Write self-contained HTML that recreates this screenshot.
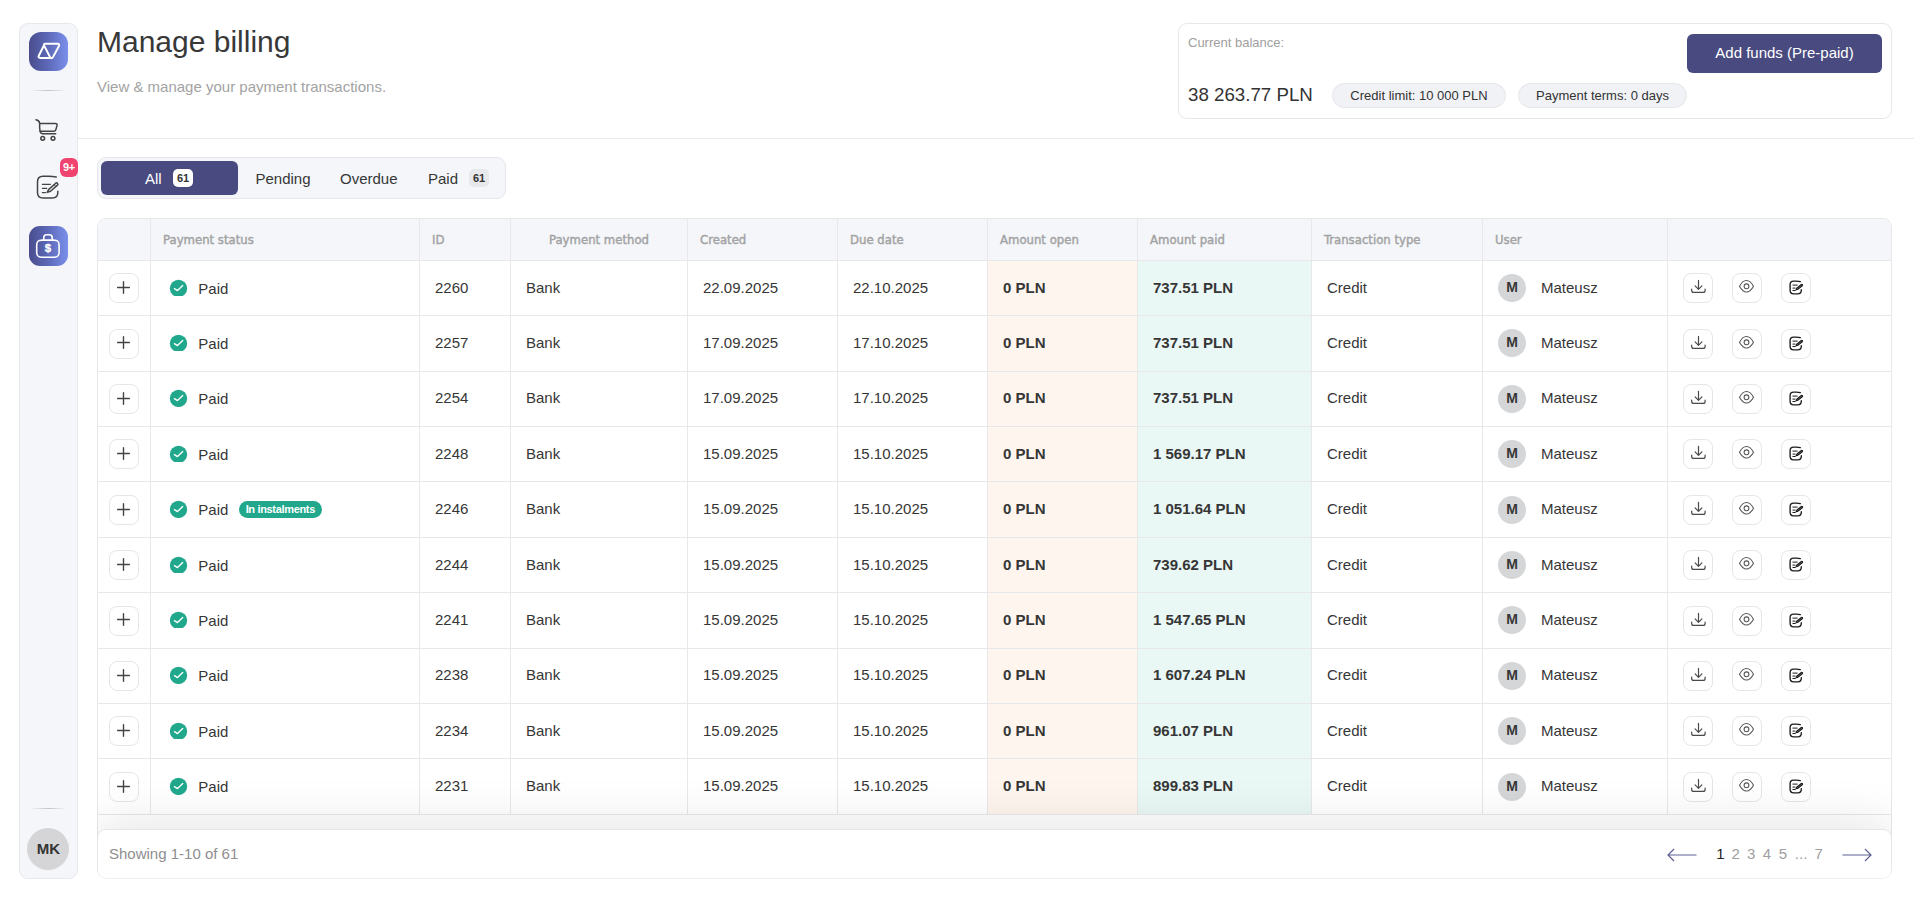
<!DOCTYPE html>
<html lang="en"><head><meta charset="utf-8"><title>Manage billing</title>
<style>
*{box-sizing:border-box;margin:0;padding:0}
html,body{width:1914px;height:901px;overflow:hidden;background:#fff}
body{position:relative;font-family:"Liberation Sans",Arial,sans-serif;font-size:15px;color:#363636;-webkit-font-smoothing:antialiased}
.abs{position:absolute}
/* sidebar */
.side{position:absolute;left:19px;top:23px;width:59px;height:855.5px;background:#f4f6fa;border:1px solid #e7e8ec;border-radius:9px}
.logo{position:absolute;left:29px;top:32px;width:39px;height:39px;border-radius:12px;background:linear-gradient(90deg,#4a4d8d 0%,#5b66b4 45%,#7b90ec 100%)}
.sdiv{position:absolute;left:30px;width:37px;height:1px;background:linear-gradient(90deg,rgba(200,200,200,0),rgba(190,190,190,.9) 50%,rgba(200,200,200,0))}
.navact{position:absolute;left:29px;top:226px;width:39px;height:40px;border-radius:11px;background:linear-gradient(90deg,#4a4d8d 0%,#5b66b4 45%,#7b90ec 100%)}
.badge9{position:absolute;left:60px;top:158px;width:18px;height:19px;border-radius:6px;background:#f0436f;color:#fff;font-weight:bold;font-size:11px;line-height:19px;text-align:center;letter-spacing:-.2px}
.mk{position:absolute;left:27px;text-indent:1px;top:828px;width:42px;height:42px;border-radius:50%;background:#d5d5d7;color:#333;font-weight:bold;font-size:15px;line-height:41px;text-align:center}
/* header */
.hline{position:absolute;left:78px;top:138px;width:1836px;height:1px;background:#e9e9eb}
h1{position:absolute;left:97px;top:25px;font-size:30px;font-weight:normal;line-height:34px;color:#383838;white-space:nowrap}
.sub{position:absolute;left:97px;top:78px;font-size:15px;line-height:18px;color:#a3a3a3;white-space:nowrap}
.bal{position:absolute;left:1178px;top:23px;width:714px;height:96px;border:1px solid #e8e8ea;border-radius:9px;background:#fff}
.bal .cb{position:absolute;left:9px;top:11px;font-size:13px;line-height:15px;color:#a0a0a0;white-space:nowrap}
.bal .amt{position:absolute;left:9px;top:60px;font-size:18.72px;line-height:22px;color:#333;white-space:nowrap}
.pill{position:absolute;top:59px;height:25px;border:1px solid #e6e7eb;background:#f1f2f6;border-radius:13px;font-size:13px;line-height:23px;color:#333;text-align:center;white-space:nowrap}
.btn{position:absolute;left:1687px;top:34px;width:195px;height:38.5px;border-radius:6px;background:#484a80;color:#fff;font-size:15px;line-height:38px;text-align:center;white-space:nowrap}
/* tabs */
.tabs{position:absolute;left:97px;top:157px;width:409px;height:42px;border:1px solid #e6e7eb;background:#f4f6fa;border-radius:9px}
.tabact{position:absolute;left:101px;top:161px;width:137px;height:34px;border-radius:6px;background:#484a80}
.tabt{position:absolute;top:170px;font-size:15px;line-height:18px;color:#363636;white-space:nowrap}
.tb{position:absolute;top:169px;width:20px;height:18px;border-radius:5px;font-size:11px;font-weight:bold;line-height:18px;text-align:center;color:#333}
/* table */
.tablewrap{position:absolute;left:97px;top:218px;width:1795px;height:661px;overflow:hidden}
.table{position:absolute;left:0;top:0;width:1795px;height:621px;border-bottom:0;border:1px solid #e8e8ea;border-radius:9px 9px 0 0;overflow:hidden;background:#fff}
.thead{position:absolute;left:0;top:0;width:1793px;height:41px;background:#f4f6fa}
.th{position:absolute;top:0;height:41px;border-left:1px solid #e8e8ea;padding-left:12px;font-family:"DejaVu Sans Condensed","DejaVu Sans","Liberation Sans",sans-serif;font-size:13px;line-height:41px;color:#a2a2a2;-webkit-text-stroke:.4px #a2a2a2;white-space:nowrap}
.th.c0{border-left:0}
.th.ctr{text-align:center;padding-left:0}
.tr{position:absolute;left:0;width:1793px;border-top:1px solid #e8e8ea}
.td{position:absolute;top:0;height:100%;border-left:1px solid #e8e8ea;padding-left:15px;white-space:nowrap;color:#363636}
.td.c0{border-left:0;padding-left:0}
.b{font-weight:bold}
.c0{left:0;width:52px}.c1{left:52px;width:269px}.c2{left:321px;width:91px}.c3{left:412px;width:177px}.c4{left:589px;width:150px}.c5{left:739px;width:150px}.c6{left:889px;width:150px}.c7{left:1039px;width:174px}.c8{left:1213px;width:171px}.c9{left:1384px;width:185px}.c10{left:1569px;width:224px}
.td.c6{background:#fef6ee}.td.c7{background:#e9f7f5}
.sq{position:absolute;top:calc(50% - 14.75px);width:29.5px;height:30px;border:1px solid #e6e6e8;border-radius:8px;background:#fff}
.sq svg{position:absolute;left:-1px;top:-1px}
.plus{left:11.2px;width:29.8px}
.plus svg{left:5.8px;top:5.9px}
.chk{position:absolute;left:18px;width:19px;overflow:hidden}.chk svg{position:absolute;left:0;top:0}
.paid{position:absolute;left:47.3px;margin-top:1px}
.inst{position:absolute;left:87.8px;top:calc(50% - 8.5px);width:83px;height:17px;border-radius:9px;background:#21a88c;color:#fff;font-size:11px;font-weight:bold;line-height:17px;text-align:center;letter-spacing:-.33px}
.av{position:absolute;left:15px;top:calc(50% - 14px);width:28px;height:28px;border-radius:50%;background:#d4d6d8;font-size:14px;font-weight:bold;line-height:27px;text-align:center;color:#363636}
.un{position:absolute;left:58px}
.a1{left:15px}.a2{left:64px}.a3{left:113px}
/* footer */
.footer{position:absolute;left:0;top:611px;width:1795px;height:49.5px;border:1px solid #e6e6e8;border-radius:9px;background:#fff;box-shadow:0 -5px 50px rgba(0,0,0,.11);clip-path:inset(-150px 0 0 0 round 0 0 9px 9px)}
.showing{position:absolute;left:11px;top:15px;font-size:15px;line-height:18px;color:#8e8e90;white-space:nowrap}
.pg{position:absolute;top:15px;font-size:15px;line-height:18px;color:#a0a0a0;white-space:nowrap}
.pg.cur{color:#222}
.arr{position:absolute;top:17.5px}
.al{left:1569.2px}.ar{left:1744px}
</style></head>
<body>

<div class="side"></div>
<div class="logo"><svg width="39" height="39" viewBox="0 0 39 39" style="position:absolute;left:0;top:0"><g fill="none" stroke="#fff" stroke-width="2" stroke-linejoin="round" stroke-linecap="round"><path d="M15.20 13.58Q14.30 11.80 16.30 11.80L28.40 11.80Q31.10 11.80 29.83 14.18L24.28 24.64Q22.50 28.00 20.78 24.61Z"/><path d="M14.90 13.50L9.91 23.49Q8.70 25.90 11.40 25.90L20.60 25.90"/></g></svg></div>
<div class="sdiv" style="top:90px"></div>
<svg class="abs" style="left:33px;top:116px" width="28" height="28" viewBox="0 0 28 28"><g fill="none" stroke="#444" stroke-width="1.5" stroke-linecap="round" stroke-linejoin="round"><path d="M3 3.800c2.200.300 3.300 1.300 3.700 3.500M6.700 7.400h15.600c1.500 0 2.100.900 1.700 2.200l-1.200 4.200c-.300 1-1 1.400-2 1.400H7.300"/><path d="M6.700 7.400c-.200 2.300-.100 5.200.300 7.800.300 1.700 1.100 2.500 2.700 2.500h13"/><circle cx="9.700" cy="22.300" r="1.900"/><circle cx="20" cy="22.300" r="1.900"/></g></svg>
<svg class="abs" style="left:33px;top:172px" width="30" height="30" viewBox="0 0 30 30"><g fill="none" stroke="#444" stroke-width="1.5" stroke-linecap="round" stroke-linejoin="round"><path d="M23.200 5.100C20.900 4.600 18.500 4.350 15.500 4.350H10C6 4.350 4.500 5.800 4.500 9.800V20.600C4.500 24.600 6 26.100 10 26.100H19.300C23.300 26.100 24.800 24.600 24.800 20.600V19.300"/><path d="M9.400 12.300h7.900M9.400 16.300h4.300M9.400 20.600h3" stroke-width="1.300"/><path d="M14.200 20.400L15.750 17.310L22.760 11.200A1.300 1.300 0 0 1 24.470 13.150L17.470 19.270Z"/><path d="M21.100 12.640L22.820 14.600" stroke-width="1"/></g></svg>
<div class="badge9">9+</div>
<div class="navact"><svg width="39" height="40" viewBox="0 0 39 40" style="position:absolute;left:0;top:0"><g fill="none" stroke="#fff" stroke-width="1.600" stroke-linecap="round" stroke-linejoin="round"><path d="M18.900 14.100H13C9 14.100 7.700 15.400 7.700 19.400V26C7.700 30 9 31.200 13 31.200H24.800C28.800 31.200 30.100 30 30.100 26V19.400C30.100 15.400 28.800 14.100 24.800 14.100Z"/><path d="M14.800 14.100V11.500C14.800 9.700 15.700 8.800 17.500 8.800H20.500C22.300 8.800 23.200 9.700 23.200 11.500V14.100"/></g><text x="19" y="26.300" text-anchor="middle" font-family="Liberation Sans, sans-serif" font-weight="bold" font-size="11.500" fill="#fff" stroke="#fff" stroke-width=".3">$</text></svg></div>
<div class="sdiv" style="top:808px"></div>
<div class="mk">MK</div>
<h1>Manage billing</h1>
<div class="sub">View &amp; manage your payment transactions.</div>
<div class="hline"></div>
<div class="bal">
<div class="cb">Current balance:</div>
<div class="amt">38 263.77 PLN</div>
<div class="pill" style="left:153px;width:174px">Credit limit: 10 000 PLN</div>
<div class="pill" style="left:339px;width:169px">Payment terms: 0 days</div>
</div>
<div class="btn">Add funds (Pre-paid)</div>
<div class="tabs"></div>
<div class="tabact"></div>
<div class="tabt" style="left:145px;color:#fff">All</div>
<div class="tb" style="left:173px;background:#fff">61</div>
<div class="tabt" style="left:255.5px">Pending</div>
<div class="tabt" style="left:340px">Overdue</div>
<div class="tabt" style="left:428px">Paid</div>
<div class="tb" style="left:469px;background:#e7e8ec">61</div>

<div class="tablewrap">
<div class="table">
<div class="thead">
<div class="th c0"></div>
<div class="th c1">Payment status</div>
<div class="th c2">ID</div>
<div class="th c3 ctr">Payment method</div>
<div class="th c4">Created</div>
<div class="th c5">Due date</div>
<div class="th c6">Amount open</div>
<div class="th c7">Amount paid</div>
<div class="th c8">Transaction type</div>
<div class="th c9">User</div>
<div class="th c10"></div>
</div>
<div class="tr" style="top:41px;height:55px;line-height:54.09px">
<div class="td c0"><span class="sq plus" style="top:12.10px"><svg width="15" height="15" viewBox="0 0 15 15"><path d="M7.500 1.650v11.700M1.650 7.500h11.700" stroke="#444" stroke-width="1.400" stroke-linecap="round" fill="none"/></svg></span></div>
<div class="td c1"><span class="chk" style="top:18px;height:17px"><svg width="19" height="19" viewBox="0 0 19 19"><circle cx="9.500" cy="9.400" r="8.650" fill="#21a88c"/><path d="M5.400 9.600L8.500 11.600L13.700 6.450" stroke="#fff" stroke-width="1.350" fill="none" stroke-linecap="round" stroke-linejoin="round"/></svg></span><span class="paid">Paid</span></div>
<div class="td c2">2260</div>
<div class="td c3">Bank</div>
<div class="td c4">22.09.2025</div>
<div class="td c5">22.10.2025</div>
<div class="td c6 b">0 PLN</div>
<div class="td c7 b">737.51 PLN</div>
<div class="td c8">Credit</div>
<div class="td c9"><span class="av" style="top:13.00px">M</span><span class="un">Mateusz</span></div>
<div class="td c10"><span class="sq a1" style="top:12.10px"><svg width="30" height="30" viewBox="0 0 30 30"><g fill="none" stroke="#4a4a4a" stroke-width="1.2" stroke-linecap="round" stroke-linejoin="round"><path d="M15.5 7.400v8.800M12.100 12.900l3.400 3.400 3.400-3.400"/><path d="M8.700 16.100v1.300a2 2 0 0 0 2 2h9.400a2 2 0 0 0 2-2v-1.300"/></g></svg></span><span class="sq a2" style="top:12.10px"><svg width="30" height="30" viewBox="0 0 30 30"><g fill="none" stroke="#555" stroke-width="1.050"><path d="M7.500 13.250C9.500 9.500 12 7.500 14.500 7.500s5 2 7 5.750c-2 3.750-4.500 5.750-7 5.750s-5-2-7-5.750z"/><circle cx="14.500" cy="13.250" r="2.400"/></g></svg></span><span class="sq a3" style="top:12.10px"><svg width="30" height="30" viewBox="0 0 30 30"><g fill="none" stroke="#1c1c1c" stroke-width="1.350" stroke-linecap="round" stroke-linejoin="round"><path d="M19.300 8.600c-1.200-.350-2.500-.500-4-.500h-2.700c-2.600 0-3.500.900-3.500 3.500v5.700c0 2.600.900 3.500 3.500 3.500h4.200c2.600 0 3.500-.900 3.500-3.500v-.600"/><path d="M11.900 12.100h4.300M11.900 15.100h2.200M11.900 17.500h2.400" stroke-width="1"/><path d="M14.970 16.730L16.030 14.830L20.280 11.500A.850 .850 0 0 1 21.320 12.840L17.070 16.170Z" fill="#555" stroke-width="1.050"/></g></svg></span></div>
</div>
<div class="tr" style="top:96px;height:56px;line-height:54.09px">
<div class="td c0"><span class="sq plus" style="top:12.50px"><svg width="15" height="15" viewBox="0 0 15 15"><path d="M7.500 1.650v11.700M1.650 7.500h11.700" stroke="#444" stroke-width="1.400" stroke-linecap="round" fill="none"/></svg></span></div>
<div class="td c1"><span class="chk" style="top:18px;height:17px"><svg width="19" height="19" viewBox="0 0 19 19"><circle cx="9.500" cy="9.400" r="8.650" fill="#21a88c"/><path d="M5.400 9.600L8.500 11.600L13.700 6.450" stroke="#fff" stroke-width="1.350" fill="none" stroke-linecap="round" stroke-linejoin="round"/></svg></span><span class="paid">Paid</span></div>
<div class="td c2">2257</div>
<div class="td c3">Bank</div>
<div class="td c4">17.09.2025</div>
<div class="td c5">17.10.2025</div>
<div class="td c6 b">0 PLN</div>
<div class="td c7 b">737.51 PLN</div>
<div class="td c8">Credit</div>
<div class="td c9"><span class="av" style="top:13.40px">M</span><span class="un">Mateusz</span></div>
<div class="td c10"><span class="sq a1" style="top:12.50px"><svg width="30" height="30" viewBox="0 0 30 30"><g fill="none" stroke="#4a4a4a" stroke-width="1.2" stroke-linecap="round" stroke-linejoin="round"><path d="M15.5 7.400v8.800M12.100 12.900l3.400 3.400 3.400-3.400"/><path d="M8.700 16.100v1.300a2 2 0 0 0 2 2h9.400a2 2 0 0 0 2-2v-1.300"/></g></svg></span><span class="sq a2" style="top:12.50px"><svg width="30" height="30" viewBox="0 0 30 30"><g fill="none" stroke="#555" stroke-width="1.050"><path d="M7.500 13.250C9.500 9.500 12 7.500 14.500 7.500s5 2 7 5.750c-2 3.750-4.500 5.750-7 5.750s-5-2-7-5.750z"/><circle cx="14.500" cy="13.250" r="2.400"/></g></svg></span><span class="sq a3" style="top:12.50px"><svg width="30" height="30" viewBox="0 0 30 30"><g fill="none" stroke="#1c1c1c" stroke-width="1.350" stroke-linecap="round" stroke-linejoin="round"><path d="M19.300 8.600c-1.200-.350-2.500-.500-4-.500h-2.700c-2.600 0-3.500.900-3.500 3.500v5.700c0 2.600.900 3.500 3.500 3.500h4.200c2.600 0 3.500-.900 3.500-3.500v-.600"/><path d="M11.900 12.100h4.300M11.900 15.100h2.200M11.900 17.500h2.400" stroke-width="1"/><path d="M14.970 16.730L16.030 14.830L20.280 11.500A.850 .850 0 0 1 21.320 12.840L17.070 16.170Z" fill="#555" stroke-width="1.050"/></g></svg></span></div>
</div>
<div class="tr" style="top:152px;height:55px;line-height:52.09px">
<div class="td c0"><span class="sq plus" style="top:11.90px"><svg width="15" height="15" viewBox="0 0 15 15"><path d="M7.500 1.650v11.700M1.650 7.500h11.700" stroke="#444" stroke-width="1.400" stroke-linecap="round" fill="none"/></svg></span></div>
<div class="td c1"><span class="chk" style="top:17px;height:18px"><svg width="19" height="19" viewBox="0 0 19 19"><circle cx="9.500" cy="9.400" r="8.650" fill="#21a88c"/><path d="M5.400 9.600L8.500 11.600L13.700 6.450" stroke="#fff" stroke-width="1.350" fill="none" stroke-linecap="round" stroke-linejoin="round"/></svg></span><span class="paid">Paid</span></div>
<div class="td c2">2254</div>
<div class="td c3">Bank</div>
<div class="td c4">17.09.2025</div>
<div class="td c5">17.10.2025</div>
<div class="td c6 b">0 PLN</div>
<div class="td c7 b">737.51 PLN</div>
<div class="td c8">Credit</div>
<div class="td c9"><span class="av" style="top:12.80px">M</span><span class="un">Mateusz</span></div>
<div class="td c10"><span class="sq a1" style="top:11.90px"><svg width="30" height="30" viewBox="0 0 30 30"><g fill="none" stroke="#4a4a4a" stroke-width="1.2" stroke-linecap="round" stroke-linejoin="round"><path d="M15.5 7.400v8.800M12.100 12.900l3.400 3.400 3.400-3.400"/><path d="M8.700 16.100v1.300a2 2 0 0 0 2 2h9.400a2 2 0 0 0 2-2v-1.300"/></g></svg></span><span class="sq a2" style="top:11.90px"><svg width="30" height="30" viewBox="0 0 30 30"><g fill="none" stroke="#555" stroke-width="1.050"><path d="M7.500 13.250C9.500 9.500 12 7.500 14.500 7.500s5 2 7 5.750c-2 3.750-4.500 5.750-7 5.750s-5-2-7-5.750z"/><circle cx="14.500" cy="13.250" r="2.400"/></g></svg></span><span class="sq a3" style="top:11.90px"><svg width="30" height="30" viewBox="0 0 30 30"><g fill="none" stroke="#1c1c1c" stroke-width="1.350" stroke-linecap="round" stroke-linejoin="round"><path d="M19.300 8.600c-1.200-.350-2.500-.500-4-.500h-2.700c-2.600 0-3.500.900-3.500 3.500v5.700c0 2.600.900 3.500 3.500 3.500h4.200c2.600 0 3.500-.900 3.500-3.500v-.600"/><path d="M11.900 12.100h4.300M11.900 15.100h2.200M11.900 17.500h2.400" stroke-width="1"/><path d="M14.970 16.730L16.030 14.830L20.280 11.500A.850 .850 0 0 1 21.320 12.840L17.070 16.170Z" fill="#555" stroke-width="1.050"/></g></svg></span></div>
</div>
<div class="tr" style="top:207px;height:55px;line-height:54.09px">
<div class="td c0"><span class="sq plus" style="top:12.30px"><svg width="15" height="15" viewBox="0 0 15 15"><path d="M7.500 1.650v11.700M1.650 7.500h11.700" stroke="#444" stroke-width="1.400" stroke-linecap="round" fill="none"/></svg></span></div>
<div class="td c1"><span class="chk" style="top:18px;height:17px"><svg width="19" height="19" viewBox="0 0 19 19"><circle cx="9.500" cy="9.400" r="8.650" fill="#21a88c"/><path d="M5.400 9.600L8.500 11.600L13.700 6.450" stroke="#fff" stroke-width="1.350" fill="none" stroke-linecap="round" stroke-linejoin="round"/></svg></span><span class="paid">Paid</span></div>
<div class="td c2">2248</div>
<div class="td c3">Bank</div>
<div class="td c4">15.09.2025</div>
<div class="td c5">15.10.2025</div>
<div class="td c6 b">0 PLN</div>
<div class="td c7 b">1 569.17 PLN</div>
<div class="td c8">Credit</div>
<div class="td c9"><span class="av" style="top:13.20px">M</span><span class="un">Mateusz</span></div>
<div class="td c10"><span class="sq a1" style="top:12.30px"><svg width="30" height="30" viewBox="0 0 30 30"><g fill="none" stroke="#4a4a4a" stroke-width="1.2" stroke-linecap="round" stroke-linejoin="round"><path d="M15.5 7.400v8.800M12.100 12.900l3.400 3.400 3.400-3.400"/><path d="M8.700 16.100v1.300a2 2 0 0 0 2 2h9.400a2 2 0 0 0 2-2v-1.300"/></g></svg></span><span class="sq a2" style="top:12.30px"><svg width="30" height="30" viewBox="0 0 30 30"><g fill="none" stroke="#555" stroke-width="1.050"><path d="M7.500 13.250C9.500 9.500 12 7.500 14.500 7.500s5 2 7 5.750c-2 3.750-4.500 5.750-7 5.750s-5-2-7-5.750z"/><circle cx="14.500" cy="13.250" r="2.400"/></g></svg></span><span class="sq a3" style="top:12.30px"><svg width="30" height="30" viewBox="0 0 30 30"><g fill="none" stroke="#1c1c1c" stroke-width="1.350" stroke-linecap="round" stroke-linejoin="round"><path d="M19.300 8.600c-1.200-.350-2.500-.500-4-.500h-2.700c-2.600 0-3.500.900-3.500 3.500v5.700c0 2.600.900 3.500 3.500 3.500h4.200c2.600 0 3.500-.900 3.500-3.500v-.600"/><path d="M11.900 12.100h4.300M11.900 15.100h2.200M11.900 17.500h2.400" stroke-width="1"/><path d="M14.970 16.730L16.030 14.830L20.280 11.500A.850 .850 0 0 1 21.320 12.840L17.070 16.170Z" fill="#555" stroke-width="1.050"/></g></svg></span></div>
</div>
<div class="tr" style="top:262px;height:56px;line-height:54.09px">
<div class="td c0"><span class="sq plus" style="top:12.70px"><svg width="15" height="15" viewBox="0 0 15 15"><path d="M7.500 1.650v11.700M1.650 7.500h11.700" stroke="#444" stroke-width="1.400" stroke-linecap="round" fill="none"/></svg></span></div>
<div class="td c1"><span class="chk" style="top:18px;height:18px"><svg width="19" height="19" viewBox="0 0 19 19"><circle cx="9.500" cy="9.400" r="8.650" fill="#21a88c"/><path d="M5.400 9.600L8.500 11.600L13.700 6.450" stroke="#fff" stroke-width="1.350" fill="none" stroke-linecap="round" stroke-linejoin="round"/></svg></span><span class="paid">Paid</span><span class="inst" style="top:19.10px">In instalments</span></div>
<div class="td c2">2246</div>
<div class="td c3">Bank</div>
<div class="td c4">15.09.2025</div>
<div class="td c5">15.10.2025</div>
<div class="td c6 b">0 PLN</div>
<div class="td c7 b">1 051.64 PLN</div>
<div class="td c8">Credit</div>
<div class="td c9"><span class="av" style="top:13.60px">M</span><span class="un">Mateusz</span></div>
<div class="td c10"><span class="sq a1" style="top:12.70px"><svg width="30" height="30" viewBox="0 0 30 30"><g fill="none" stroke="#4a4a4a" stroke-width="1.2" stroke-linecap="round" stroke-linejoin="round"><path d="M15.5 7.400v8.800M12.100 12.900l3.400 3.400 3.400-3.400"/><path d="M8.700 16.100v1.300a2 2 0 0 0 2 2h9.400a2 2 0 0 0 2-2v-1.300"/></g></svg></span><span class="sq a2" style="top:12.70px"><svg width="30" height="30" viewBox="0 0 30 30"><g fill="none" stroke="#555" stroke-width="1.050"><path d="M7.500 13.250C9.500 9.500 12 7.500 14.500 7.500s5 2 7 5.750c-2 3.750-4.500 5.750-7 5.750s-5-2-7-5.750z"/><circle cx="14.500" cy="13.250" r="2.400"/></g></svg></span><span class="sq a3" style="top:12.70px"><svg width="30" height="30" viewBox="0 0 30 30"><g fill="none" stroke="#1c1c1c" stroke-width="1.350" stroke-linecap="round" stroke-linejoin="round"><path d="M19.300 8.600c-1.200-.350-2.500-.500-4-.500h-2.700c-2.600 0-3.500.900-3.500 3.500v5.700c0 2.600.900 3.500 3.500 3.500h4.200c2.600 0 3.500-.900 3.500-3.500v-.600"/><path d="M11.900 12.100h4.300M11.900 15.100h2.200M11.900 17.500h2.400" stroke-width="1"/><path d="M14.970 16.730L16.030 14.830L20.280 11.500A.850 .850 0 0 1 21.320 12.840L17.070 16.170Z" fill="#555" stroke-width="1.050"/></g></svg></span></div>
</div>
<div class="tr" style="top:318px;height:55px;line-height:54.09px">
<div class="td c0"><span class="sq plus" style="top:12.10px"><svg width="15" height="15" viewBox="0 0 15 15"><path d="M7.500 1.650v11.700M1.650 7.500h11.700" stroke="#444" stroke-width="1.400" stroke-linecap="round" fill="none"/></svg></span></div>
<div class="td c1"><span class="chk" style="top:18px;height:17px"><svg width="19" height="19" viewBox="0 0 19 19"><circle cx="9.500" cy="9.400" r="8.650" fill="#21a88c"/><path d="M5.400 9.600L8.500 11.600L13.700 6.450" stroke="#fff" stroke-width="1.350" fill="none" stroke-linecap="round" stroke-linejoin="round"/></svg></span><span class="paid">Paid</span></div>
<div class="td c2">2244</div>
<div class="td c3">Bank</div>
<div class="td c4">15.09.2025</div>
<div class="td c5">15.10.2025</div>
<div class="td c6 b">0 PLN</div>
<div class="td c7 b">739.62 PLN</div>
<div class="td c8">Credit</div>
<div class="td c9"><span class="av" style="top:13.00px">M</span><span class="un">Mateusz</span></div>
<div class="td c10"><span class="sq a1" style="top:12.10px"><svg width="30" height="30" viewBox="0 0 30 30"><g fill="none" stroke="#4a4a4a" stroke-width="1.2" stroke-linecap="round" stroke-linejoin="round"><path d="M15.5 7.400v8.800M12.100 12.900l3.400 3.400 3.400-3.400"/><path d="M8.700 16.100v1.300a2 2 0 0 0 2 2h9.400a2 2 0 0 0 2-2v-1.300"/></g></svg></span><span class="sq a2" style="top:12.10px"><svg width="30" height="30" viewBox="0 0 30 30"><g fill="none" stroke="#555" stroke-width="1.050"><path d="M7.500 13.250C9.500 9.500 12 7.500 14.500 7.500s5 2 7 5.750c-2 3.750-4.500 5.750-7 5.750s-5-2-7-5.750z"/><circle cx="14.500" cy="13.250" r="2.400"/></g></svg></span><span class="sq a3" style="top:12.10px"><svg width="30" height="30" viewBox="0 0 30 30"><g fill="none" stroke="#1c1c1c" stroke-width="1.350" stroke-linecap="round" stroke-linejoin="round"><path d="M19.300 8.600c-1.200-.350-2.500-.500-4-.500h-2.700c-2.600 0-3.500.900-3.500 3.500v5.700c0 2.600.900 3.500 3.500 3.500h4.200c2.600 0 3.500-.900 3.500-3.500v-.600"/><path d="M11.900 12.100h4.300M11.900 15.100h2.200M11.900 17.500h2.400" stroke-width="1"/><path d="M14.970 16.730L16.030 14.830L20.280 11.500A.850 .850 0 0 1 21.320 12.840L17.070 16.170Z" fill="#555" stroke-width="1.050"/></g></svg></span></div>
</div>
<div class="tr" style="top:373px;height:56px;line-height:54.09px">
<div class="td c0"><span class="sq plus" style="top:12.50px"><svg width="15" height="15" viewBox="0 0 15 15"><path d="M7.500 1.650v11.700M1.650 7.500h11.700" stroke="#444" stroke-width="1.400" stroke-linecap="round" fill="none"/></svg></span></div>
<div class="td c1"><span class="chk" style="top:18px;height:17px"><svg width="19" height="19" viewBox="0 0 19 19"><circle cx="9.500" cy="9.400" r="8.650" fill="#21a88c"/><path d="M5.400 9.600L8.500 11.600L13.700 6.450" stroke="#fff" stroke-width="1.350" fill="none" stroke-linecap="round" stroke-linejoin="round"/></svg></span><span class="paid">Paid</span></div>
<div class="td c2">2241</div>
<div class="td c3">Bank</div>
<div class="td c4">15.09.2025</div>
<div class="td c5">15.10.2025</div>
<div class="td c6 b">0 PLN</div>
<div class="td c7 b">1 547.65 PLN</div>
<div class="td c8">Credit</div>
<div class="td c9"><span class="av" style="top:13.40px">M</span><span class="un">Mateusz</span></div>
<div class="td c10"><span class="sq a1" style="top:12.50px"><svg width="30" height="30" viewBox="0 0 30 30"><g fill="none" stroke="#4a4a4a" stroke-width="1.2" stroke-linecap="round" stroke-linejoin="round"><path d="M15.5 7.400v8.800M12.100 12.900l3.400 3.400 3.400-3.400"/><path d="M8.700 16.100v1.300a2 2 0 0 0 2 2h9.400a2 2 0 0 0 2-2v-1.300"/></g></svg></span><span class="sq a2" style="top:12.50px"><svg width="30" height="30" viewBox="0 0 30 30"><g fill="none" stroke="#555" stroke-width="1.050"><path d="M7.500 13.250C9.500 9.500 12 7.500 14.500 7.500s5 2 7 5.750c-2 3.750-4.500 5.750-7 5.750s-5-2-7-5.750z"/><circle cx="14.500" cy="13.250" r="2.400"/></g></svg></span><span class="sq a3" style="top:12.50px"><svg width="30" height="30" viewBox="0 0 30 30"><g fill="none" stroke="#1c1c1c" stroke-width="1.350" stroke-linecap="round" stroke-linejoin="round"><path d="M19.300 8.600c-1.200-.350-2.500-.500-4-.500h-2.700c-2.600 0-3.500.900-3.500 3.500v5.700c0 2.600.900 3.500 3.500 3.500h4.200c2.600 0 3.500-.900 3.500-3.500v-.600"/><path d="M11.900 12.100h4.300M11.900 15.100h2.200M11.900 17.500h2.400" stroke-width="1"/><path d="M14.970 16.730L16.030 14.830L20.280 11.500A.850 .850 0 0 1 21.320 12.840L17.070 16.170Z" fill="#555" stroke-width="1.050"/></g></svg></span></div>
</div>
<div class="tr" style="top:429px;height:55px;line-height:52.09px">
<div class="td c0"><span class="sq plus" style="top:11.90px"><svg width="15" height="15" viewBox="0 0 15 15"><path d="M7.500 1.650v11.700M1.650 7.500h11.700" stroke="#444" stroke-width="1.400" stroke-linecap="round" fill="none"/></svg></span></div>
<div class="td c1"><span class="chk" style="top:17px;height:18px"><svg width="19" height="19" viewBox="0 0 19 19"><circle cx="9.500" cy="9.400" r="8.650" fill="#21a88c"/><path d="M5.400 9.600L8.500 11.600L13.700 6.450" stroke="#fff" stroke-width="1.350" fill="none" stroke-linecap="round" stroke-linejoin="round"/></svg></span><span class="paid">Paid</span></div>
<div class="td c2">2238</div>
<div class="td c3">Bank</div>
<div class="td c4">15.09.2025</div>
<div class="td c5">15.10.2025</div>
<div class="td c6 b">0 PLN</div>
<div class="td c7 b">1 607.24 PLN</div>
<div class="td c8">Credit</div>
<div class="td c9"><span class="av" style="top:12.80px">M</span><span class="un">Mateusz</span></div>
<div class="td c10"><span class="sq a1" style="top:11.90px"><svg width="30" height="30" viewBox="0 0 30 30"><g fill="none" stroke="#4a4a4a" stroke-width="1.2" stroke-linecap="round" stroke-linejoin="round"><path d="M15.5 7.400v8.800M12.100 12.900l3.400 3.400 3.400-3.400"/><path d="M8.700 16.100v1.300a2 2 0 0 0 2 2h9.400a2 2 0 0 0 2-2v-1.300"/></g></svg></span><span class="sq a2" style="top:11.90px"><svg width="30" height="30" viewBox="0 0 30 30"><g fill="none" stroke="#555" stroke-width="1.050"><path d="M7.500 13.250C9.500 9.500 12 7.500 14.500 7.500s5 2 7 5.750c-2 3.750-4.500 5.750-7 5.750s-5-2-7-5.750z"/><circle cx="14.500" cy="13.250" r="2.400"/></g></svg></span><span class="sq a3" style="top:11.90px"><svg width="30" height="30" viewBox="0 0 30 30"><g fill="none" stroke="#1c1c1c" stroke-width="1.350" stroke-linecap="round" stroke-linejoin="round"><path d="M19.300 8.600c-1.200-.350-2.500-.500-4-.500h-2.700c-2.600 0-3.500.900-3.500 3.500v5.700c0 2.600.900 3.500 3.500 3.500h4.200c2.600 0 3.500-.900 3.500-3.500v-.600"/><path d="M11.900 12.100h4.300M11.900 15.100h2.200M11.900 17.500h2.400" stroke-width="1"/><path d="M14.970 16.730L16.030 14.830L20.280 11.500A.850 .850 0 0 1 21.320 12.840L17.070 16.170Z" fill="#555" stroke-width="1.050"/></g></svg></span></div>
</div>
<div class="tr" style="top:484px;height:55px;line-height:54.09px">
<div class="td c0"><span class="sq plus" style="top:12.30px"><svg width="15" height="15" viewBox="0 0 15 15"><path d="M7.500 1.650v11.700M1.650 7.500h11.700" stroke="#444" stroke-width="1.400" stroke-linecap="round" fill="none"/></svg></span></div>
<div class="td c1"><span class="chk" style="top:18px;height:17px"><svg width="19" height="19" viewBox="0 0 19 19"><circle cx="9.500" cy="9.400" r="8.650" fill="#21a88c"/><path d="M5.400 9.600L8.500 11.600L13.700 6.450" stroke="#fff" stroke-width="1.350" fill="none" stroke-linecap="round" stroke-linejoin="round"/></svg></span><span class="paid">Paid</span></div>
<div class="td c2">2234</div>
<div class="td c3">Bank</div>
<div class="td c4">15.09.2025</div>
<div class="td c5">15.10.2025</div>
<div class="td c6 b">0 PLN</div>
<div class="td c7 b">961.07 PLN</div>
<div class="td c8">Credit</div>
<div class="td c9"><span class="av" style="top:13.20px">M</span><span class="un">Mateusz</span></div>
<div class="td c10"><span class="sq a1" style="top:12.30px"><svg width="30" height="30" viewBox="0 0 30 30"><g fill="none" stroke="#4a4a4a" stroke-width="1.2" stroke-linecap="round" stroke-linejoin="round"><path d="M15.5 7.400v8.800M12.100 12.900l3.400 3.400 3.400-3.400"/><path d="M8.700 16.100v1.300a2 2 0 0 0 2 2h9.400a2 2 0 0 0 2-2v-1.300"/></g></svg></span><span class="sq a2" style="top:12.30px"><svg width="30" height="30" viewBox="0 0 30 30"><g fill="none" stroke="#555" stroke-width="1.050"><path d="M7.500 13.250C9.500 9.500 12 7.500 14.500 7.500s5 2 7 5.750c-2 3.750-4.500 5.750-7 5.750s-5-2-7-5.750z"/><circle cx="14.500" cy="13.250" r="2.400"/></g></svg></span><span class="sq a3" style="top:12.30px"><svg width="30" height="30" viewBox="0 0 30 30"><g fill="none" stroke="#1c1c1c" stroke-width="1.350" stroke-linecap="round" stroke-linejoin="round"><path d="M19.300 8.600c-1.200-.350-2.500-.500-4-.500h-2.700c-2.600 0-3.500.900-3.500 3.500v5.700c0 2.600.900 3.500 3.500 3.500h4.200c2.600 0 3.500-.900 3.500-3.500v-.600"/><path d="M11.900 12.100h4.300M11.900 15.100h2.200M11.900 17.500h2.400" stroke-width="1"/><path d="M14.970 16.730L16.030 14.830L20.280 11.500A.850 .850 0 0 1 21.320 12.840L17.070 16.170Z" fill="#555" stroke-width="1.050"/></g></svg></span></div>
</div>
<div class="tr" style="top:539px;height:56px;line-height:54.09px">
<div class="td c0"><span class="sq plus" style="top:12.70px"><svg width="15" height="15" viewBox="0 0 15 15"><path d="M7.500 1.650v11.700M1.650 7.500h11.700" stroke="#444" stroke-width="1.400" stroke-linecap="round" fill="none"/></svg></span></div>
<div class="td c1"><span class="chk" style="top:18px;height:18px"><svg width="19" height="19" viewBox="0 0 19 19"><circle cx="9.500" cy="9.400" r="8.650" fill="#21a88c"/><path d="M5.400 9.600L8.500 11.600L13.700 6.450" stroke="#fff" stroke-width="1.350" fill="none" stroke-linecap="round" stroke-linejoin="round"/></svg></span><span class="paid">Paid</span></div>
<div class="td c2">2231</div>
<div class="td c3">Bank</div>
<div class="td c4">15.09.2025</div>
<div class="td c5">15.10.2025</div>
<div class="td c6 b">0 PLN</div>
<div class="td c7 b">899.83 PLN</div>
<div class="td c8">Credit</div>
<div class="td c9"><span class="av" style="top:13.60px">M</span><span class="un">Mateusz</span></div>
<div class="td c10"><span class="sq a1" style="top:12.70px"><svg width="30" height="30" viewBox="0 0 30 30"><g fill="none" stroke="#4a4a4a" stroke-width="1.2" stroke-linecap="round" stroke-linejoin="round"><path d="M15.5 7.400v8.800M12.100 12.900l3.400 3.400 3.400-3.400"/><path d="M8.700 16.100v1.300a2 2 0 0 0 2 2h9.400a2 2 0 0 0 2-2v-1.300"/></g></svg></span><span class="sq a2" style="top:12.70px"><svg width="30" height="30" viewBox="0 0 30 30"><g fill="none" stroke="#555" stroke-width="1.050"><path d="M7.500 13.250C9.500 9.500 12 7.500 14.500 7.500s5 2 7 5.750c-2 3.750-4.500 5.750-7 5.750s-5-2-7-5.750z"/><circle cx="14.500" cy="13.250" r="2.400"/></g></svg></span><span class="sq a3" style="top:12.70px"><svg width="30" height="30" viewBox="0 0 30 30"><g fill="none" stroke="#1c1c1c" stroke-width="1.350" stroke-linecap="round" stroke-linejoin="round"><path d="M19.300 8.600c-1.200-.350-2.500-.500-4-.500h-2.700c-2.600 0-3.500.900-3.500 3.500v5.700c0 2.600.900 3.500 3.500 3.500h4.200c2.600 0 3.500-.900 3.500-3.500v-.600"/><path d="M11.900 12.100h4.300M11.900 15.100h2.200M11.900 17.500h2.400" stroke-width="1"/><path d="M14.970 16.730L16.030 14.830L20.280 11.500A.850 .850 0 0 1 21.320 12.840L17.070 16.170Z" fill="#555" stroke-width="1.050"/></g></svg></span></div>
</div>
<div class="tr" style="top:595px;height:1px"></div>
</div>
<div class="footer">
<span class="showing">Showing 1-10 of 61</span>
<svg class="arr al" width="30" height="14" viewBox="0 0 30 14"><path d="M29.5 7H1M7 1L1 7l6 6" stroke="#5d6091" stroke-width="1.2" fill="none"/></svg>
<span class="pg cur" style="left:1618.2px">1</span><span class="pg" style="left:1633.4px">2</span><span class="pg" style="left:1649.1px">3</span><span class="pg" style="left:1664.8px">4</span><span class="pg" style="left:1680.7px">5</span><span class="pg" style="left:1696.8px">...</span><span class="pg" style="left:1716.4px">7</span>
<svg class="arr ar" width="30" height="14" viewBox="0 0 30 14"><path d="M.5 7H29M23 1l6 6-6 6" stroke="#5d6091" stroke-width="1.2" fill="none"/></svg>
</div>
</div>
</body></html>
